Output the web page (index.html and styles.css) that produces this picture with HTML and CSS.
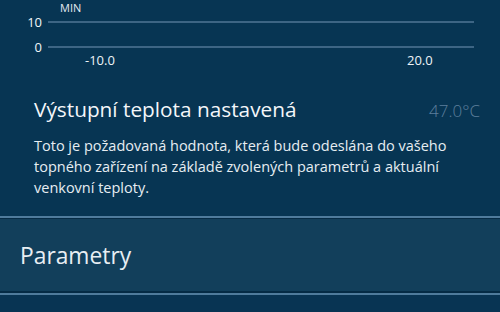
FILE: index.html
```html
<!DOCTYPE html>
<html lang="cs">
<head>
<meta charset="utf-8">
<link rel="stylesheet" href="styles.css">
</head>
<body>
<div class="page">
  <section class="chart">
    <div class="min-label">MIN</div>
    <div class="grid-row row1">
      <span class="ylabel">10</span>
      <span class="gridline"></span>
    </div>
    <div class="grid-row row2">
      <span class="ylabel">0</span>
      <span class="gridline"></span>
    </div>
    <div class="xlabels">
      <span class="x1">-10.0</span>
      <span class="x2">20.0</span>
    </div>
  </section>
  <section class="info">
    <div class="info-head">
      <h2 class="title">Výstupní teplota nastavená</h2>
      <span class="value">47.0°C</span>
    </div>
    <p class="desc">Toto je požadovaná hodnota, která bude odeslána do vašeho topného zařízení na základě zvolených parametrů a aktuální venkovní teploty.</p>
  </section>
  <div class="sep-top"></div>
  <section class="panel">
    <span class="panel-title">Parametry</span>
  </section>
  <div class="sep-bottom"></div>
  <div class="rest"></div>
</div>
</body>
</html>
```
FILE: styles.css
```css
html, body {
  margin: 0;
  padding: 0;
  background: #073553;
  overflow: hidden;
}
.page {
  width: 500px;
  height: 312px;
  background: #073553;
  font-family: "Open Sans", "Liberation Sans", sans-serif;
  color: #eef3f7;
  overflow: hidden;
}
.chart {
  height: 66px;
}
.min-label {
  height: 16px;
  line-height: 16px;
  padding-left: 60px;
  font-size: 11px;
  color: #e3ebf2;
  box-sizing: border-box;
}
.grid-row {
  display: flex;
  align-items: center;
  height: 12px;
}
.row2 {
  margin-top: 13px;
}
.ylabel {
  width: 42px;
  text-align: right;
  font-size: 13px;
  line-height: 12px;
  color: #f2f6f9;
}
.gridline {
  margin-left: 6px;
  width: 426px;
  height: 2px;
  background: #3d6584;
}
.xlabels {
  position: relative;
  height: 13px;
  font-size: 13px;
  line-height: 15px;
  color: #eef3f7;
}
.x1, .x2 {
  position: absolute;
  top: 0;
}
.x1 { left: 85px; }
.x2 { left: 407px; }
.info {
  padding: 30px 20px 0 34px;
  box-sizing: border-box;
  height: 150px;
}
.info-head {
  display: flex;
  justify-content: space-between;
  align-items: baseline;
}
.title {
  margin: 0;
  font-size: 20.8px;
  line-height: 26px;
  font-weight: 400;
  color: #f4f7fa;
}
.value {
  font-size: 17px;
  font-weight: 300;
  color: #5d7f9c;
}
.desc {
  margin: 13px 0 0 0;
  font-size: 14.5px;
  line-height: 21px;
  color: #e6edf2;
  max-width: 440px;
}
.sep-top {
  height: 2px;
  background: #4f7b9c;
  border-bottom: 1px solid #052b45;
}
.panel {
  height: 72px;
  background: #123f5b;
  display: flex;
  align-items: center;
  padding-left: 20px;
}
.panel-title {
  font-size: 22.8px;
  color: #e8eef3;
}
.sep-bottom {
  height: 2px;
  background: #4f7b9c;
  border-top: 2px solid #052b45;
}
.rest {
  height: 20px;
  background: #083453;
}
```
